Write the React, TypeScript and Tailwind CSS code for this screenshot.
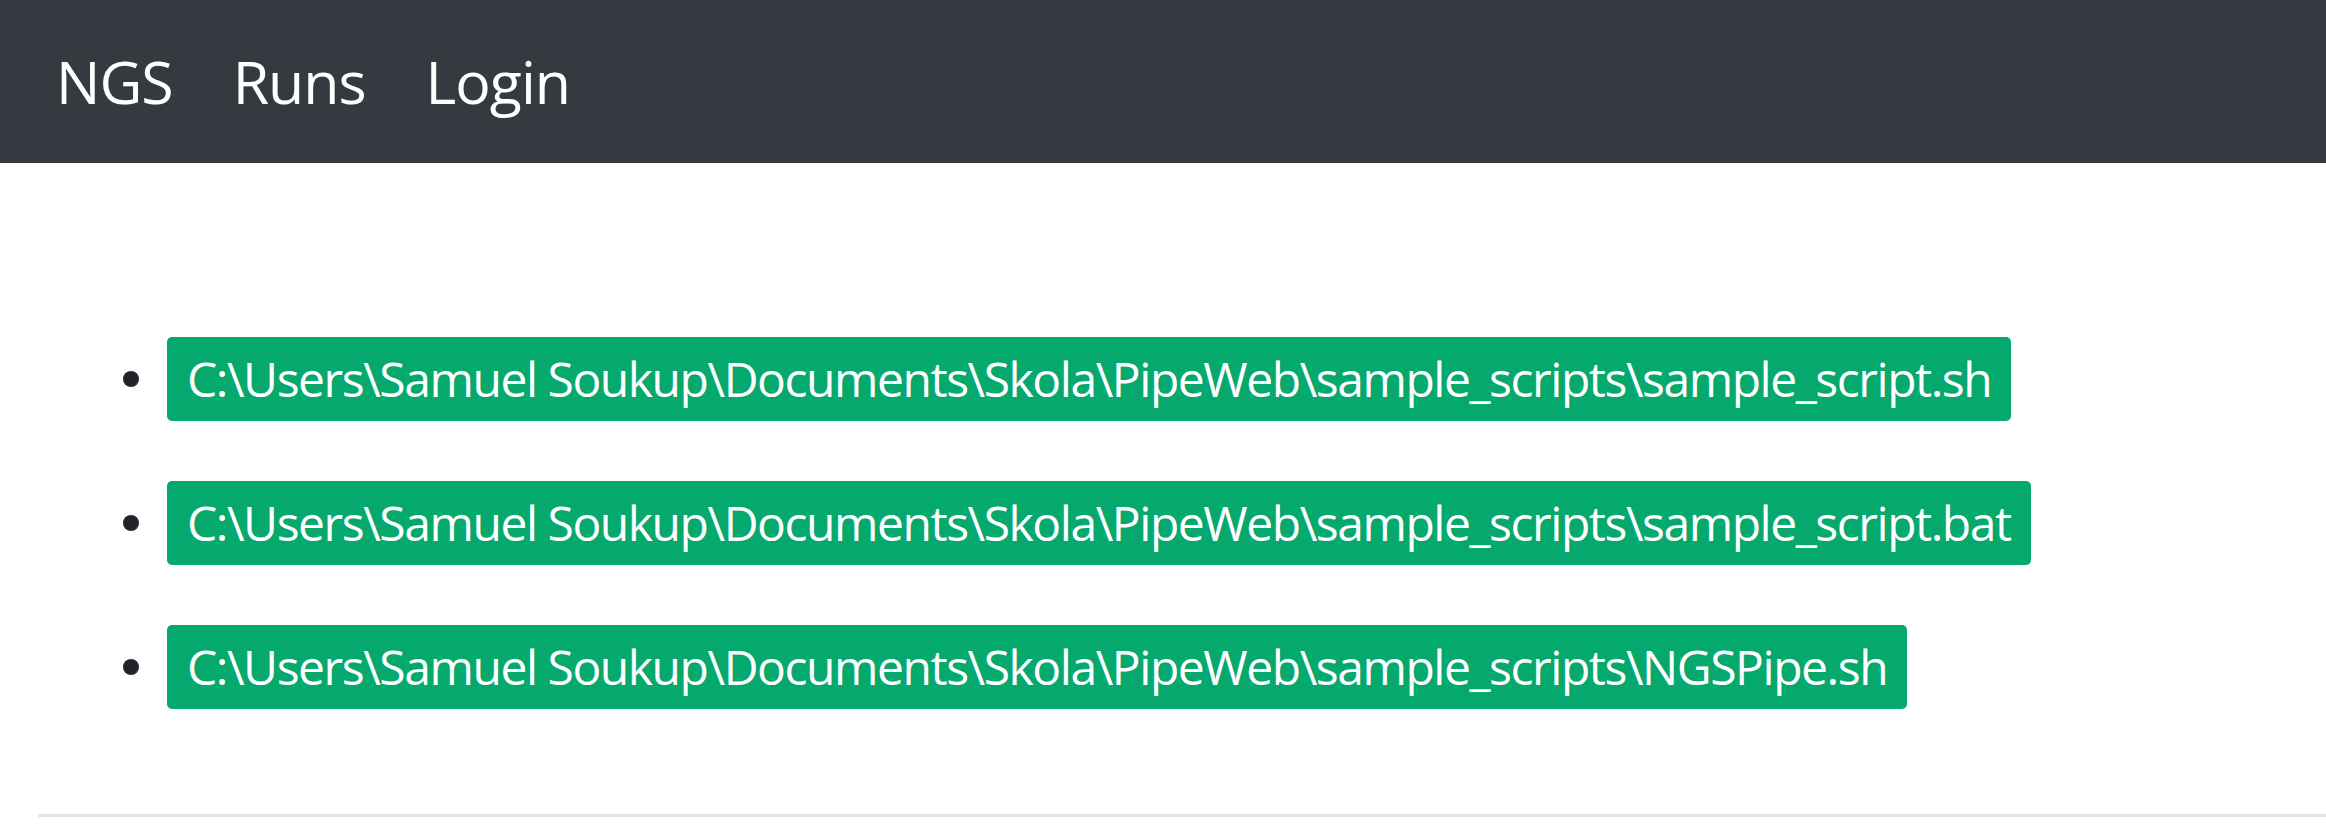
const navItems = ["NGS", "Runs", "Login"];

const scripts = [
  "C:\\Users\\Samuel Soukup\\Documents\\Skola\\PipeWeb\\sample_scripts\\sample_script.sh",
  "C:\\Users\\Samuel Soukup\\Documents\\Skola\\PipeWeb\\sample_scripts\\sample_script.bat",
  "C:\\Users\\Samuel Soukup\\Documents\\Skola\\PipeWeb\\sample_scripts\\NGSPipe.sh",
];

export default function App() {
  return (
    <div className="min-h-screen bg-white font-['Open_Sans',sans-serif]">
      {/* Navbar */}
      <nav className="h-[163px] bg-[#343a40] flex items-center gap-[60px] pl-[56px]">
        {navItems.map((item) => (
          <a key={item} href="#" className="text-[59px] leading-none tracking-[-1px] text-white">
            {item}
          </a>
        ))}
      </nav>

      {/* Script list */}
      <main className="pl-[38px]">
        <ul className="pt-[174px] pb-[105px] flex flex-col gap-[60px]">
          {scripts.map((path) => (
            <li key={path} className="flex items-center">
              <span className="ml-[85px] w-4 h-4 rounded-full bg-[#212529]" />
              <span className="ml-[28px] h-[84px] flex items-center px-[20px] rounded-[5px] bg-[#05a86d] text-white text-[48px] leading-none tracking-[-1.45px] whitespace-nowrap">
                {path}
              </span>
            </li>
          ))}
        </ul>
        <hr className="border-0 h-[3px] bg-[#e4e4e4]" />
      </main>
    </div>
  );
}
